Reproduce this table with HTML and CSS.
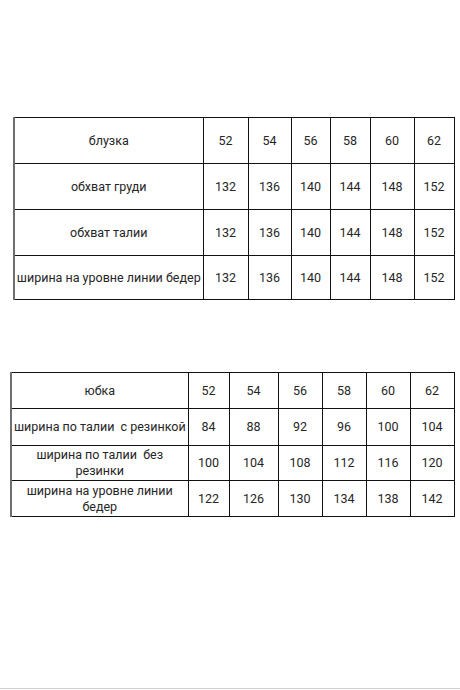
FILE: index.html
```html
<!DOCTYPE html>
<html lang="ru">
<head>
<meta charset="utf-8">
<link rel="stylesheet" href="styles.css">
</head>
<body>
<div class="page">
  <table class="sizes blouse">
    <colgroup>
      <col class="c-name"><col class="c1"><col class="c2"><col class="c3"><col class="c4"><col class="c5"><col class="c6">
    </colgroup>
    <tr class="r1"><td>блузка</td><td>52</td><td>54</td><td>56</td><td>58</td><td>60</td><td>62</td></tr>
    <tr class="r2"><td>обхват груди</td><td>132</td><td>136</td><td>140</td><td>144</td><td>148</td><td>152</td></tr>
    <tr class="r3"><td>обхват талии</td><td>132</td><td>136</td><td>140</td><td>144</td><td>148</td><td>152</td></tr>
    <tr class="r4"><td>ширина на уровне линии бедер</td><td>132</td><td>136</td><td>140</td><td>144</td><td>148</td><td>152</td></tr>
  </table>

  <table class="sizes skirt">
    <colgroup>
      <col class="c-name"><col class="c1"><col class="c2"><col class="c3"><col class="c4"><col class="c5"><col class="c6">
    </colgroup>
    <tr class="r1"><td>юбка</td><td>52</td><td>54</td><td>56</td><td>58</td><td>60</td><td>62</td></tr>
    <tr class="r2"><td>ширина по талии&nbsp; с резинкой</td><td>84</td><td>88</td><td>92</td><td>96</td><td>100</td><td>104</td></tr>
    <tr class="r3"><td>ширина по талии&nbsp; без резинки</td><td>100</td><td>104</td><td>108</td><td>112</td><td>116</td><td>120</td></tr>
    <tr class="r4"><td>ширина на уровне линии бедер</td><td>122</td><td>126</td><td>130</td><td>134</td><td>138</td><td>142</td></tr>
  </table>
</div>
</body>
</html>
```

FILE: styles.css
```css
html, body {
  margin: 0;
  padding: 0;
  background: #ffffff;
}

.page {
  box-sizing: border-box;
  height: 689px;
  padding-top: 117px;
  border-bottom: 1px solid #cfcfcf;
  font-family: Roboto, "Noto Sans", sans-serif;
  font-size: 12.5px;
  color: #262626;
}

.sizes {
  border-collapse: collapse;
  table-layout: fixed;
  border-left: 2px solid #6f6f6f;
}

.sizes td {
  border: 1px solid #111111;
  text-align: center;
  vertical-align: middle;
  padding: 0 1px;
  line-height: 16px;
}

.blouse {
  width: 440px;
  margin-left: 13px;
}

.blouse .c-name { width: 189px; }
.blouse .c1 { width: 45px; }
.blouse .c2 { width: 43px; }
.blouse .c3 { width: 39px; }
.blouse .c4 { width: 40px; }
.blouse .c5 { width: 44px; }
.blouse .c6 { width: 40px; }

.blouse .r1, .blouse .r2, .blouse .r3 { height: 46px; }
.blouse .r4 { height: 44px; }

.skirt {
  width: 443px;
  margin-left: 10px;
  margin-top: 72px;
}

.skirt .c-name { width: 177px; }
.skirt .c1 { width: 41px; }
.skirt .c2 { width: 49px; }
.skirt .c3 { width: 44px; }
.skirt .c4 { width: 44px; }
.skirt .c5 { width: 44px; }
.skirt .c6 { width: 44px; }

.skirt .r1 { height: 36px; }
.skirt .r2 { height: 37px; }
.skirt .r3 { height: 35px; }
.skirt .r4 { height: 36px; }
```
